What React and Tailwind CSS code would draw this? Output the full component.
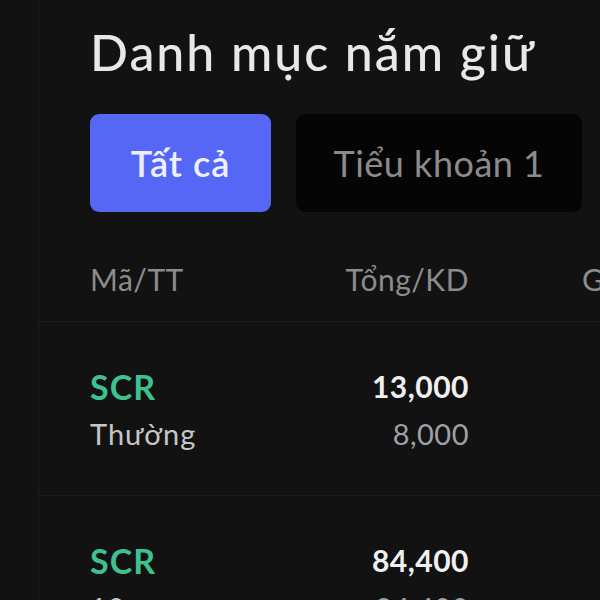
import React from 'react';

const holdings = [
  { code: 'SCR', type: 'Thường', total: '13,000', available: '8,000' },
  { code: 'SCR', type: '10', total: '84,400', available: '84,400' },
];

export default function App() {
  return (
    <div
      className="w-[600px] h-[600px] overflow-hidden flex bg-[#111111]"
      style={{ fontFamily: 'Lato, "Noto Sans", sans-serif' }}
    >
      <div className="w-[39px] shrink-0 border-r border-[#1b1b1b] bg-[#111111]" />

      <div className="flex-1 min-w-0 bg-[#121212]">
        {/* Title */}
        <div className="pl-[51px] pt-[22px]">
          <h2 className="text-[50px] leading-[60px] font-medium tracking-[2px] text-[#e8e8e8] whitespace-nowrap">
            Danh mục nắm giữ
          </h2>
        </div>

        {/* Account tabs */}
        <div className="flex gap-[25px] pl-[51px] mt-[32px]">
          <button className="w-[181px] h-[98px] shrink-0 rounded-[9px] bg-[#5667f6] text-[#eef0ff] text-[36px] font-semibold tracking-[1px]">
            Tất cả
          </button>
          <button className="w-[286px] h-[98px] shrink-0 rounded-[9px] bg-[#050505] text-[#8b8b8b] text-[36px] tracking-[0.5px]">
            Tiểu khoản 1
          </button>
        </div>

        {/* Table header */}
        <div className="h-[110px] flex items-center pl-[51px] pt-[26px] border-b border-[#1c1c1c] text-[30px] text-[#8c8c8c] whitespace-nowrap">
          <div className="w-[379px] shrink-0 flex justify-between">
            <span className="tracking-[0.5px]">Mã/TT</span>
            <span className="tracking-[0.5px]">Tổng/KD</span>
          </div>
          <span className="ml-[113px] shrink-0">Giá vốn</span>
        </div>

        {/* Rows */}
        {holdings.map((h, i) => (
          <div key={i} className="h-[174px] border-b border-[#1c1c1c] pl-[51px] pt-[44px]">
            <div className="w-[379px] flex justify-between items-center h-[40px]">
              <span className="text-[34px] font-bold tracking-[1px] text-[#3ec190]">{h.code}</span>
              <span className="text-[30px] font-bold tracking-[0.5px] text-[#f0f0f0]">{h.total}</span>
            </div>
            <div className="w-[379px] flex justify-between items-center h-[40px] mt-[8px]">
              <span className="text-[29px] tracking-[1px] text-[#c6c6c6]">{h.type}</span>
              <span className="text-[29px] tracking-[0.5px] text-[#9ea1a7]">{h.available}</span>
            </div>
          </div>
        ))}
      </div>
    </div>
  );
}
